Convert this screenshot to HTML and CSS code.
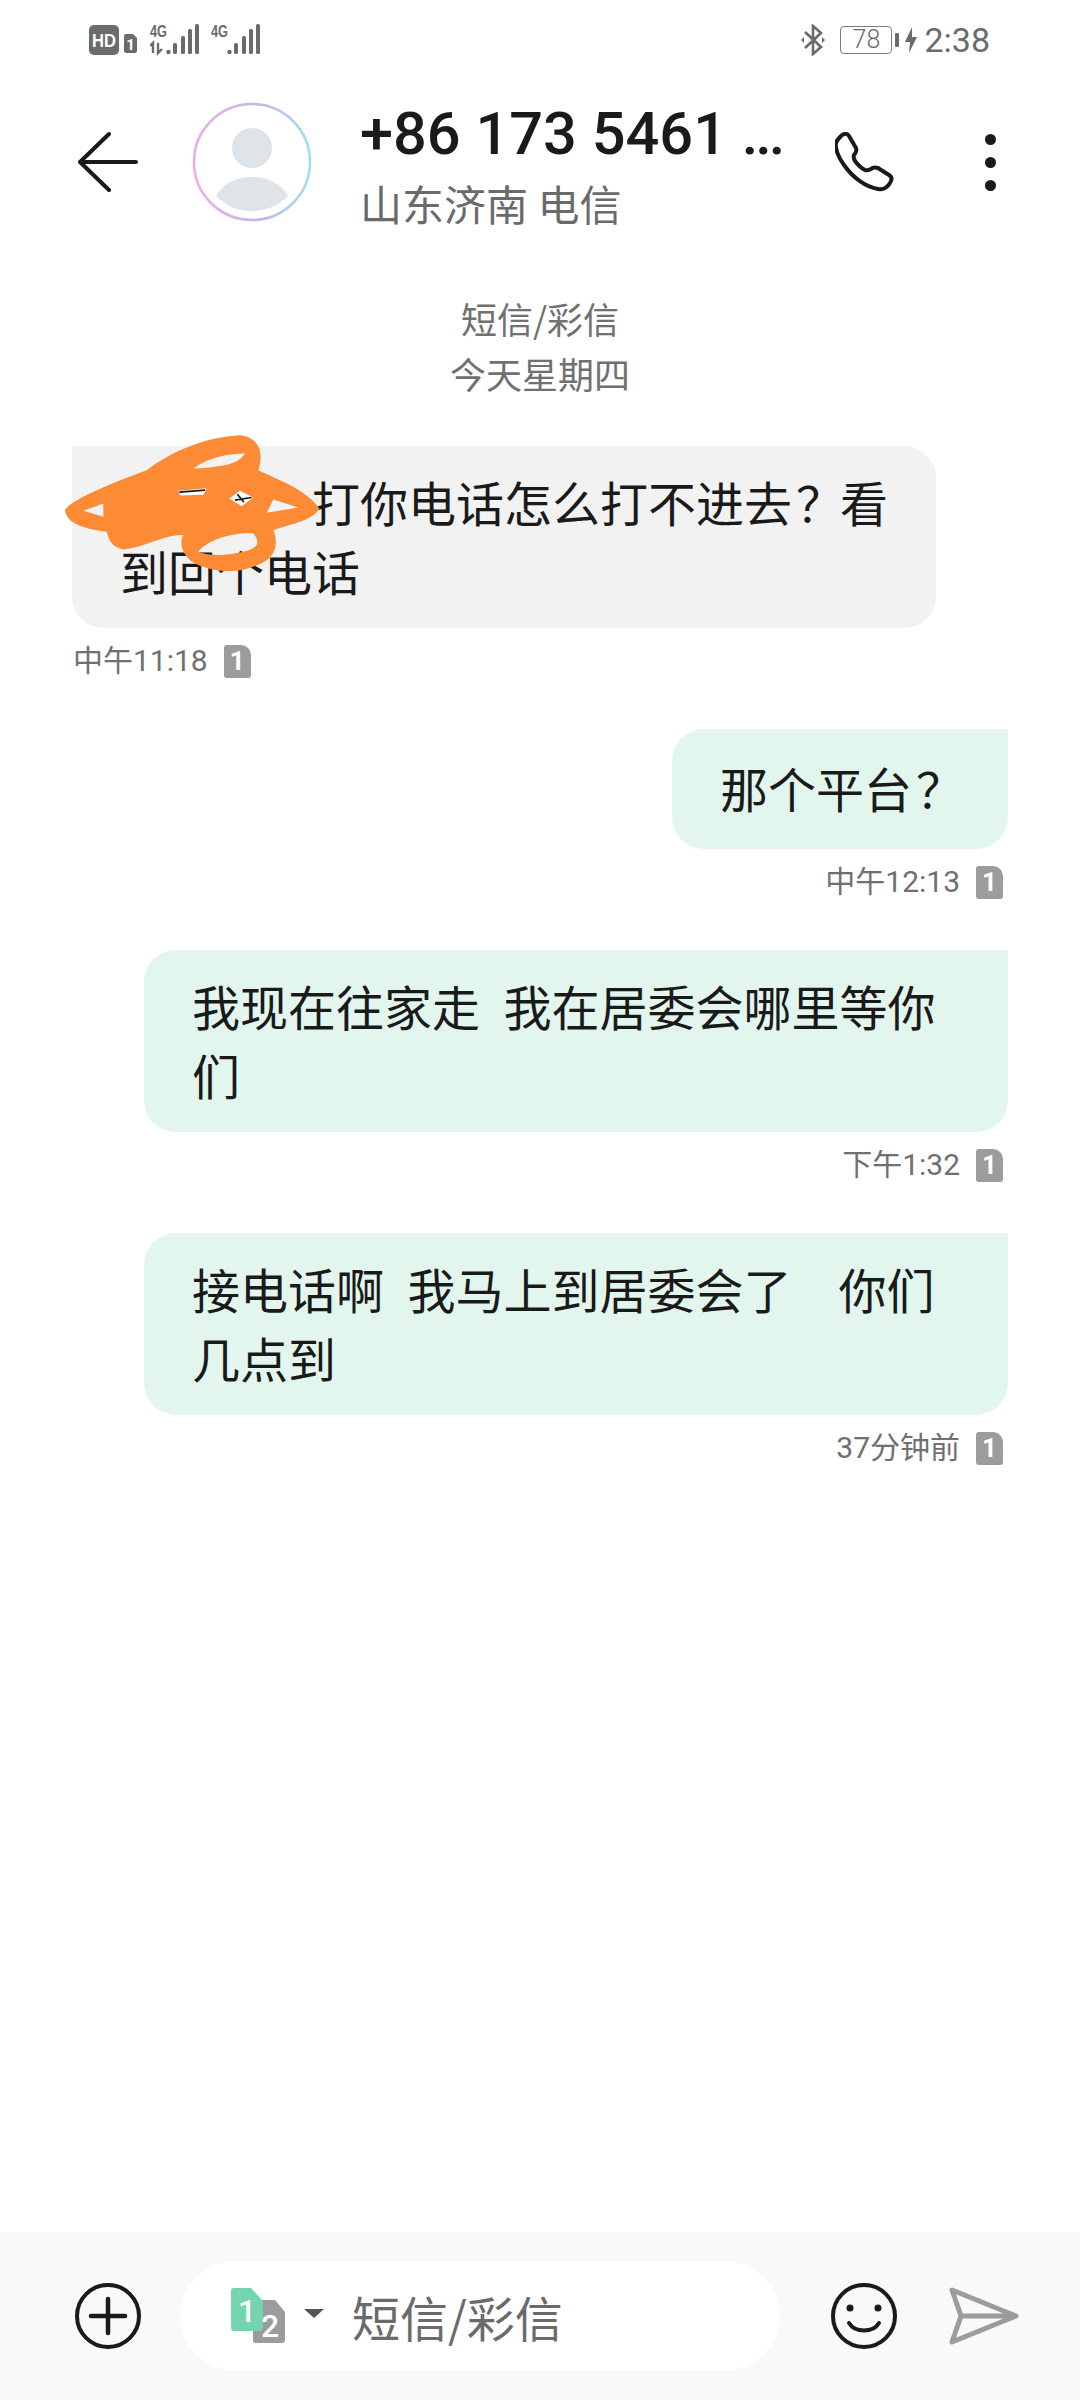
FILE: index.html
```html
<!DOCTYPE html>
<html lang="zh-CN">
<head>
  <meta charset="UTF-8">
  <title>短信</title>
  <link rel="stylesheet" href="styles.css">
</head>
<body>
  <div class="status-bar">
    <div class="status-left">
      <svg class="hd-icon" width="52" height="30" viewBox="0 0 52 30">
        <rect x="0" y="0" width="30" height="30" rx="5" fill="#6b6b6b"/>
        <text x="3" y="22" class="hd-text" textLength="24" lengthAdjust="spacingAndGlyphs">HD</text>
        <path d="M37 9 H44 L48 13 V26 Q48 28 46 28 H37 Q35 28 35 26 V11 Q35 9 37 9 Z" fill="#6b6b6b"/>
        <text x="41.5" y="25" text-anchor="middle" class="sim-text">1</text>
      </svg>
      <svg width="50" height="32" viewBox="0 0 50 32">
        <text x="0" y="13" class="net-text" textLength="17" lengthAdjust="spacingAndGlyphs">4G</text>
        <path d="M3 29 V19 L0 22 M8 19 V29 L12 25" fill="none" stroke="#6b6b6b" stroke-width="2.4"/>
        <circle cx="18.5" cy="28" r="2.2" fill="#6b6b6b"/>
        <rect x="23" y="19" width="4" height="11" rx="1.5" fill="#6b6b6b"/>
        <rect x="31" y="12" width="4" height="18" rx="1.5" fill="#6b6b6b"/>
        <rect x="38" y="5" width="4" height="25" rx="1.5" fill="#6b6b6b"/>
        <rect x="45" y="0" width="4" height="30" rx="1.5" fill="#6b6b6b"/>
      </svg>
      <svg width="50" height="32" viewBox="0 0 50 32">
        <text x="0" y="13" class="net-text" textLength="17" lengthAdjust="spacingAndGlyphs">4G</text>
        <circle cx="18.5" cy="28" r="2.2" fill="#6b6b6b"/>
        <rect x="23" y="19" width="4" height="11" rx="1.5" fill="#6b6b6b"/>
        <rect x="31" y="12" width="4" height="18" rx="1.5" fill="#6b6b6b"/>
        <rect x="38" y="5" width="4" height="25" rx="1.5" fill="#6b6b6b"/>
        <rect x="45" y="0" width="4" height="30" rx="1.5" fill="#6b6b6b"/>
      </svg>
    </div>
    <div class="status-right">
      <svg class="bt-icon" width="26" height="32" viewBox="0 0 26 32" fill="none" stroke="#6b6b6b" stroke-width="2.6">
        <path d="M5 8 L21 23 L13 30 V2 L21 9 L5 24"/>
        <path d="M4 13 L1 16 L4 19 Z" fill="#6b6b6b" stroke="none"/>
        <path d="M22 13 L25 16 L22 19 Z" fill="#6b6b6b" stroke="none"/>
      </svg>
      <div class="battery">78</div>
      <div class="battery-tip"></div>
      <svg class="bolt" width="12" height="26" viewBox="0 0 12 26"><path d="M7 0 L0 15 H5 L4 26 L12 10 H7 Z" fill="#6b6b6b"/></svg>
      <span class="clock">2:38</span>
    </div>
  </div>

  <div class="header">
    <svg class="back" width="60" height="62" viewBox="0 0 60 62" fill="none" stroke="#1a1a1a" stroke-width="4" stroke-linecap="round" stroke-linejoin="round">
      <path d="M31 3 L2 31 L31 59 M2 31 H58"/>
    </svg>
    <svg class="avatar" width="120" height="120" viewBox="0 0 120 120">
      <defs>
        <linearGradient id="ring" x1="0" y1="0" x2="1" y2="0">
          <stop offset="0" stop-color="#ecaee8"/>
          <stop offset="0.55" stop-color="#c3b6e6"/>
          <stop offset="1" stop-color="#a3deec"/>
        </linearGradient>
      </defs>
      <circle cx="60" cy="60" r="58" fill="#fff" stroke="url(#ring)" stroke-width="2.6"/>
      <circle cx="60" cy="46" r="20" fill="#dfe4e8"/>
      <path d="M24 94 C32 80 46 75 60 75 C74 75 88 80 96 94 C86 105 72 109 60 109 C48 109 34 105 24 94 Z" fill="#dfe4e8"/>
    </svg>
    <div class="contact">
      <div class="contact-name">+86 173 5461 <span class="dots">...</span></div>
      <div class="contact-place">山东济南 电信</div>
    </div>
    <svg class="phone" width="60" height="60" viewBox="0 0 60 60" fill="none" stroke="#1a1a1a" stroke-width="4" stroke-linejoin="round">
      <path d="M6 4 C9 1 12 1 14 4 L21 16 C22 19 21 21 19 23 C18 25 19 27 20 29 C23 33 26 36 30 38 C32 39 34 38 36 37 C38 35 40 35 43 36 L54 43 C57 45 57 48 55 51 C52 56 48 58 43 57 C31 55 18 46 9 33 C3 25 0 16 1 11 C2 8 4 6 6 4 Z"/>
    </svg>
    <div class="more"><i></i><i></i><i></i></div>
  </div>

  <div class="thread">
    <div class="date-block">
      <div>短信/彩信</div>
      <div>今天星期四</div>
    </div>

    <div class="msg in">
      <div class="bubble">
        <p class="covered">打你电话怎么打不进去<span class="punct">？</span>看</p>
        <p>到回个电话</p>
        <svg class="scribble" width="256" height="139" viewBox="72 45 768 416">
          <path fill="#fd8b35" fill-rule="evenodd" d="M75 270 C90 240 200 195 320 150 C400 90 500 50 600 45 C650 50 675 90 655 150 C720 180 800 210 838 265 C820 300 760 310 700 330 C720 380 700 420 650 435 C590 465 500 455 450 420 C420 390 420 360 430 345 C380 340 320 380 250 388 C210 380 205 350 200 335 C130 325 80 310 75 270 Z M460 145 C500 115 560 100 615 100 C600 125 570 140 460 145 Z M130 272 L190 250 L190 290 Z M680 278 L700 238 L775 262 Z M475 395 C500 360 580 335 640 340 C665 370 650 385 610 395 C570 405 510 410 475 395 Z"/>
          <path d="M415 212 L500 204 L490 224 L420 226 Z" fill="#fff"/>
          <path d="M418 216 L495 210" stroke="#1a1a1a" stroke-width="5"/>
          <path d="M568 235 L600 212 L640 232 L605 258 Z" fill="#fff"/>
          <path d="M585 240 L635 232 M592 222 L612 246" stroke="#1a1a1a" stroke-width="5"/>
        </svg>
      </div>
      <div class="meta"><span>中午11:18</span><span class="sim-badge">1</span></div>
    </div>

    <div class="msg out">
      <div class="bubble"><p>那个平台<span class="punct">？</span></p></div>
      <div class="meta"><span>中午12:13</span><span class="sim-badge">1</span></div>
    </div>

    <div class="msg out">
      <div class="bubble wide"><p>我现在往家走  我在居委会哪里等你们</p></div>
      <div class="meta"><span>下午1:32</span><span class="sim-badge">1</span></div>
    </div>

    <div class="msg out">
      <div class="bubble wide"><p>接电话啊  我马上到居委会了    你们几点到</p></div>
      <div class="meta"><span>37分钟前</span><span class="sim-badge">1</span></div>
    </div>
  </div>

  <div class="composer">
    <svg class="plus" width="66" height="66" viewBox="0 0 66 66" fill="none" stroke="#1a1a1a" stroke-linecap="round">
      <ellipse cx="33" cy="33" rx="31" ry="31" stroke-width="4"/>
      <path d="M16 33 H50 M33 16 V50" stroke-width="4.5"/>
    </svg>
    <div class="input-pill">
      <svg class="sim-pick" width="54" height="56" viewBox="0 0 54 56">
        <path d="M22 12 H44 L54 24 V52 Q54 55 51 55 H25 Q22 55 22 52 Z" fill="#9c9c9c"/>
        <path d="M3 0 H20 L32 13 V39 Q32 43 28 43 H3 Q0 43 0 39 V3 Q0 0 3 0 Z" fill="#74d4ae"/>
        <text x="16" y="34" text-anchor="middle" class="sim-one">1</text>
        <text x="39" y="49" text-anchor="middle" class="sim-two">2</text>
      </svg>
      <svg class="caret" width="20" height="10" viewBox="0 0 20 10"><path d="M0 1 H20 L10 10 Z" fill="#555"/></svg>
      <span class="placeholder">短信/彩信</span>
    </div>
    <svg class="smile" width="66" height="66" viewBox="0 0 66 66" fill="none" stroke="#1a1a1a" stroke-width="4" stroke-linecap="round">
      <circle cx="33" cy="33" r="31"/>
      <circle cx="19" cy="25" r="3.5" fill="#1a1a1a" stroke="none"/>
      <circle cx="47" cy="25" r="3.5" fill="#1a1a1a" stroke="none"/>
      <path d="M18 40 C24 50 42 50 48 40"/>
    </svg>
    <svg class="send" width="70" height="58" viewBox="0 0 70 58" fill="none" stroke="#9c9c9c" stroke-width="5" stroke-linecap="round" stroke-linejoin="round">
      <path d="M3 3 L67 29 L3 55 L12 29 Z M12 29 H67"/>
    </svg>
  </div>
</body>
</html>
```

FILE: styles.css
```css
* {
  box-sizing: border-box;
}

body {
  margin: 0;
  width: 1080px;
  height: 2400px;
  background-color: #fff;
  color: #1a1a1a;
  font-family: "Noto Sans CJK SC", Roboto, sans-serif;
  display: flex;
  flex-direction: column;
  overflow: hidden;
}

p {
  margin: 0;
}

/* status bar */
.status-bar {
  height: 80px;
  padding: 0 90px 0 89px;
  display: flex;
  justify-content: space-between;
  align-items: center;
}

.status-left {
  display: flex;
  align-items: center;
  gap: 9px;
}

.status-left svg:last-child {
  margin-left: 2px;
}

.hd-text {
  font: 700 19px "Liberation Sans", sans-serif;
  fill: #fff;
}

.sim-text {
  font: 700 15px Roboto, sans-serif;
  fill: #fff;
}

.net-text {
  font: 700 16px "Liberation Sans", sans-serif;
  fill: #6b6b6b;
}

.sim-one,
.sim-two {
  font: 500 32px Roboto, sans-serif;
  fill: #fff;
}

.status-right {
  display: flex;
  align-items: center;
  color: #6b6b6b;
}

.bt-icon {
  margin-right: 14px;
}

.battery {
  width: 52px;
  height: 28px;
  border: 1.5px solid #7a7a7a;
  border-radius: 4px;
  font: 300 25px/25px Roboto, sans-serif;
  text-align: center;
}

.battery-tip {
  width: 4px;
  height: 14px;
  margin-left: 3px;
  background-color: #6b6b6b;
  border-radius: 1px;
}

.bolt {
  margin-left: 6px;
  margin-right: 7px;
}

.clock {
  font: 400 34px/40px Roboto, sans-serif;
}

/* header */
.header {
  height: 162px;
  display: flex;
  align-items: center;
  padding: 2px 0 0 78px;
}

.avatar {
  margin-left: 54px;
}

.contact {
  margin-left: 48px;
  width: 475px;
  padding-top: 5px;
}

.contact-name {
  font: 500 59.5px/70px Roboto, sans-serif;
  white-space: nowrap;
}

.dots {
  letter-spacing: -3px;
}

.contact-place {
  margin-top: 6px;
  font-size: 42px;
  line-height: 56px;
  color: #6a6a6a;
}

.more {
  margin-left: 90px;
  display: flex;
  flex-direction: column;
  gap: 12px;
}

.more i {
  display: block;
  width: 11px;
  height: 11px;
  border-radius: 50%;
  background-color: #1a1a1a;
}

/* messages */
.thread {
  flex: 1;
  padding: 49px 72px 0;
}

.date-block {
  text-align: center;
  color: #707070;
  font-size: 36px;
  line-height: 55px;
  margin-bottom: 45px;
}

.msg {
  display: flex;
  flex-direction: column;
  margin-bottom: 51px;
}

.msg.in {
  align-items: flex-start;
}

.msg.out {
  align-items: flex-end;
}

.bubble {
  position: relative;
  padding: 21px 48px 23px;
  font-size: 48px;
  line-height: 69px;
  word-spacing: 1px;
}

.bubble p {
  white-space: pre-wrap;
}

/* the question mark sits a little further into its cell than the font puts it */
.punct {
  padding-left: 4px;
  letter-spacing: -4px;
}

.msg.in .bubble {
  width: 864px;
  background-color: #f2f2f2;
  border-radius: 0 32px 32px 32px;
}

.msg.out .bubble {
  padding: 24px 48px 27px;
  background-color: #e3f6ee;
  border-radius: 32px 0 32px 32px;
}

.msg.out .bubble.wide {
  width: 864px;
  padding: 21px 48px 23px;
}

/* the first words are hidden under the scribble */
.covered {
  text-indent: 192px;
  margin-right: -4px;
}

.scribble {
  position: absolute;
  left: -8px;
  top: -11px;
}

.meta {
  display: flex;
  align-items: center;
  gap: 16px;
  margin-top: 16px;
  height: 34px;
  font: 400 30px/34px Roboto, "Noto Sans CJK SC", sans-serif;
  color: #707070;
}

.msg.in .meta {
  padding-left: 1px;
}

.msg.out .meta {
  padding-right: 5px;
}

.sim-badge {
  width: 27px;
  height: 33px;
  background-color: #9c9c9c;
  color: #fff;
  border-radius: 3px 10px 3px 3px;
  font: 700 26px/33px Roboto, sans-serif;
  text-align: center;
}

/* composer */
.composer {
  height: 168px;
  background-color: #f9f9f9;
  display: flex;
  align-items: center;
  padding-left: 75px;
}

.input-pill {
  margin-left: 39px;
  width: 600px;
  height: 108px;
  background-color: #fff;
  border-radius: 54px;
  display: flex;
  align-items: center;
  padding-left: 51px;
}

.caret {
  margin-left: 19px;
  margin-bottom: 6px;
}

.placeholder {
  margin-left: 28px;
  font-size: 48px;
  color: #6a6a6a;
}

.smile {
  margin-left: 51px;
}

.send {
  margin-left: 52px;
}
```
